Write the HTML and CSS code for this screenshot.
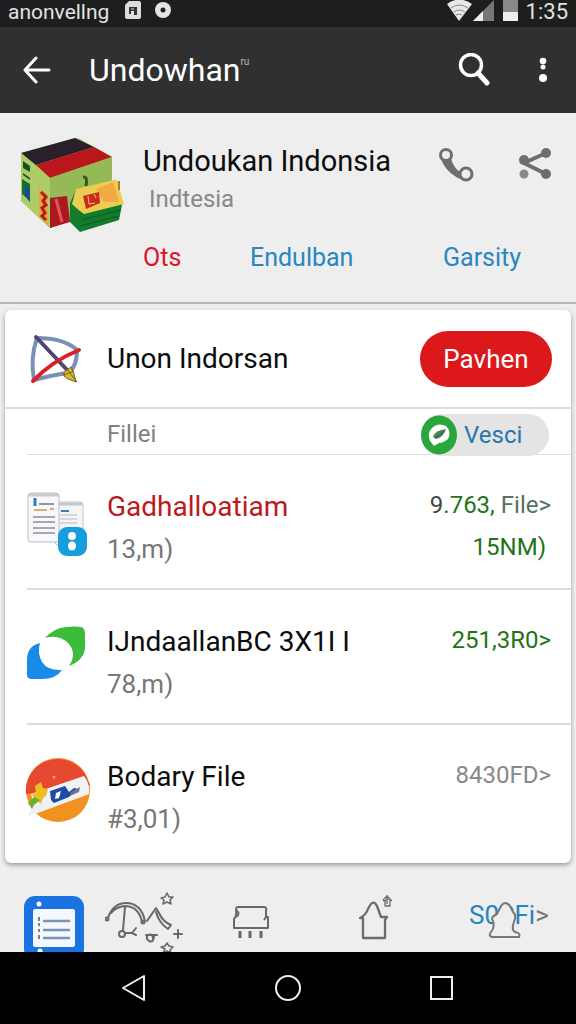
FILE: index.html
```
<!DOCTYPE html>
<html lang="id">

<head>
    <meta charset="UTF-8">
    <meta name="viewport" content="width=device-width, initial-scale=1.0">
    <title>Undowhan</title>
    <link rel="stylesheet" href="styles.css">
</head>

<body>
    <div class="status">
        <span class="status-name">anonvellng</span>
        <svg class="status-note" width="16" height="20" viewBox="0 0 16 20">
            <path d="M4 1H14Q16 1 16 3V17Q16 19 14 19H2Q0 19 0 17V5Z" fill="#ddd" />
            <path d="M4 7H12V15H9V11H6V14H4Z" fill="#333" />
            <path d="M6 9H9" stroke="#ddd" />
        </svg>
        <svg width="16" height="20" viewBox="0 0 16 20">
            <circle cx="8" cy="10" r="8" fill="#e4e4e4" />
            <circle cx="8" cy="10" r="2.5" fill="#222" />
        </svg>
        <span class="status-right">
            <svg width="72" height="22" viewBox="0 0 72 22">
                <path d="M0 4Q12 -5 25 4L12 21Z" fill="#e8e8e8" />
                <path d="M4 8Q12 2 21 8M7 12Q12 8 18 12M9 15Q12 13 15 15" fill="none" stroke="#888" />
                <path d="M47 0V21H26Z" fill="#777" />
                <path d="M36 11V21H26Z" fill="#eee" />
                <path d="M56 0H71V21H56Z" fill="#888" />
                <path d="M56 12H71V21H56Z" fill="#eee" />
            </svg>
            <span>1:35</span>
        </span>
    </div>

    <header class="appbar">
        <button class="icon-btn" aria-label="Back">
            <svg width="28" height="28" viewBox="0 0 28 28">
                <path d="M13 2L2 14L13 26M2 14H26" fill="none" stroke="#fff" stroke-width="3" stroke-linecap="round" stroke-linejoin="round" />
            </svg>
        </button>
        <h1>Undowhan<sup>ru</sup></h1>
        <button class="icon-btn" aria-label="Search">
            <svg width="32" height="34" viewBox="0 0 32 34">
                <circle cx="13" cy="12" r="10.5" fill="none" stroke="#fff" stroke-width="3.5" />
                <path d="M20 20L29 30" stroke="#fff" stroke-width="5" stroke-linecap="round" />
            </svg>
        </button>
        <button class="icon-btn more" aria-label="More">
            <svg width="10" height="26" viewBox="0 0 10 26">
                <circle cx="5" cy="4" r="3.3" fill="#fff" />
                <circle cx="5" cy="10" r="2.5" fill="#fff" />
                <circle cx="5" cy="21" r="4" fill="#fff" />
            </svg>
        </button>
    </header>

    <section class="profile">
        <svg class="logo" width="108" height="102" viewBox="0 0 108 102">
            <path d="M3 17L57 2Q59 2 62 3L94 21V68L32 92L3 65Z" fill="#a3c45d" />
            <path d="M3 17L57 2L76 11L18 29Z" fill="#2a202b" />
            <path d="M18 29L76 11L94 21L32 42Z" fill="#b9171b" />
            <path d="M32 42L94 21V68L32 92Z" fill="#96b958" />
            <path d="M3 17L32 42V92L3 65Z" fill="#adcb67" />
            <path d="M5 25L12 30V36L5 32ZM5 37L12 42V44L5 39Z" fill="#185021" />
            <path d="M4 43L12 48V65L4 58Z" fill="#176c38" />
            <path d="M7 50L12 54V66L7 60Z" fill="#174d94" />
            <path d="M21 52L30 59V89L21 81Z" fill="#eba33b" />
            <path d="M23 56L28 61L25 65L28 69L24 72L27 77L24 80L28 84" fill="none" stroke="#a82019" stroke-width="3" />
            <path d="M32 62L49 60L52 86L32 92Z" fill="#aa1820" />
            <path d="M38 63L44 86" stroke="#e35358" stroke-width="3" />
            <path d="M65 41Q70 40 68 50" fill="none" stroke="#315b20" stroke-width="3" />
            <path d="M58 54L52 67V86L62 96L101 84L104 69L100 55Z" fill="#127b2c" />
            <path d="M58 53L96 44Q100 43 100 48L106 68L66 78Q60 74 54 68Z" fill="#edcd51" />
            <path d="M78 53L95 46L101 66L86 66Z" fill="#f2a943" />
            <path d="M65 60L81 56L82 67L68 73Z" fill="#c82b20" />
            <path d="M70 60L71 68L77 67M76 58L78 62" stroke="#f6cf58" fill="none" />
            <path d="M63 84L103 74M62 90L101 80" stroke="#075c22" />
            <path d="M101 45V54" stroke="#a57d2b" stroke-width="2" />
        </svg>
        <div class="profile-name">
            <h2>Undoukan Indonsia</h2>
            <p>Indtesia</p>
        </div>
        <div class="profile-actions">
            <button class="icon-btn" aria-label="Call">
                <svg width="36" height="36" viewBox="0 0 36 36">
                    <path d="M2 9Q7 27 27 34L29 27L22 25Q16 21 13 12Z" fill="#6e6e6e" />
                    <circle cx="8" cy="8" r="5.5" fill="#eee" stroke="#6e6e6e" stroke-width="3" />
                    <circle cx="28" cy="27" r="6" fill="#eee" stroke="#6e6e6e" stroke-width="3" />
                </svg>
            </button>
            <button class="icon-btn" aria-label="Share">
                <svg width="34" height="34" viewBox="0 0 34 34">
                    <path d="M28 6L6 16L28 27" fill="none" stroke="#6e6e6e" stroke-width="4" />
                    <circle cx="28" cy="6" r="5" fill="#6e6e6e" />
                    <circle cx="6" cy="13" r="5" fill="#6e6e6e" />
                    <circle cx="6" cy="27" r="4.5" fill="#888" />
                    <circle cx="28" cy="27" r="5" fill="#6e6e6e" />
                </svg>
            </button>
        </div>
        <nav class="profile-tabs">
            <a class="active" href="#ots">Ots</a>
            <a href="#endulban">Endulban</a>
            <a href="#garsity">Garsity</a>
        </nav>
    </section>

    <main class="card">
        <div class="row lead">
            <svg class="row-icon" width="62" height="60" viewBox="0 0 62 60">
                <path d="M10 9Q37 9 50 21Q50 38 41 44Q25 46 7 51Q3 29 10 9Z" fill="none" stroke="#7890b4" stroke-width="4" />
                <path d="M9 8L43 44" stroke="#514478" stroke-width="4" stroke-linecap="round" />
                <path d="M6 52Q25 32 52 21" fill="none" stroke="#d9202b" stroke-width="4" stroke-linecap="round" />
                <path d="M37 43L44 38L47 45L49 53L41 50L37 47Z" fill="#d5b831" stroke="#74611b" />
                <path d="M40 40L50 53M37 46L47 42" stroke="#74611b" />
            </svg>
            <h3>Unon Indorsan</h3>
            <button class="pay">Pavhen</button>
        </div>
        <div class="row filter">
            <span class="filter-label">Fillei</span>
            <button class="chip">
                <svg width="36" height="40" viewBox="0 0 36 40">
                    <ellipse cx="18" cy="20" rx="18" ry="19.5" fill="#2ba63a" />
                    <path d="M13 31L9 26Q6 18 11 13Q17 7 25 11Q31 17 27 24Q22 28 18 28Z" fill="#fff" />
                    <path d="M12 22Q14 15 25 14Q22 23 15 24Z" fill="#52845c" />
                    <path d="M14 23L24 16" stroke="#295d39" />
                </svg>
                <span>Vesci</span>
            </button>
        </div>
        <ul class="files">
            <li>
                <svg class="row-icon" width="62" height="68" viewBox="0 0 62 68">
                    <rect x="28" y="11" width="28" height="43" rx="3" fill="#f4f5f7" stroke="#bfc3c7" />
                    <path d="M29 13H55" stroke="#c5c8cb" stroke-width="3" />
                    <path d="M34 20H42" stroke="#407bb8" stroke-width="2" />
                    <path d="M33 24H50M33 28H50M33 32H50" stroke="#b3b9c2" />
                    <rect x="1" y="2" width="31" height="49" rx="3" fill="#f8f8fa" stroke="#b9bcc1" />
                    <path d="M2 4H31" stroke="#c9cbcf" stroke-width="3" />
                    <path d="M8 7V15" stroke="#267bc5" stroke-width="3" />
                    <path d="M12 13H27" stroke="#8f969c" stroke-width="2" />
                    <path d="M7 19H20M23 18H27" stroke="#d7ad85" stroke-width="2" />
                    <path d="M6 26H28M6 31H28M6 37H28M6 42H28" stroke="#888da1" stroke-width="1.5" />
                    <rect x="31" y="36" width="29" height="29" rx="9" fill="#159dde" />
                    <circle cx="45" cy="45" r="4" fill="#fff" />
                    <ellipse cx="45" cy="55" rx="4" ry="4.5" fill="#fff" />
                </svg>
                <div class="file">
                    <h3 class="red">Gadhalloatiam</h3>
                    <p>13,m)</p>
                </div>
                <a class="size green" href="#file1"><span class="dark">9</span>.763, <span class="slate">File&gt;</span><br><span class="second">15NM)</span></a>
            </li>
            <li>
                <svg class="row-icon" width="62" height="60" viewBox="0 0 62 60">
                    <path d="M18 12Q27 2 39 1Q48 0 54 1Q58 2 58 8V22Q57 34 42 40Q50 28 42 18Q32 8 18 12Z" fill="#3bbd3b" />
                    <path d="M13 17Q0 20 0 34V49Q0 53 5 53H15Q29 53 35 44Q21 45 15 36Q10 27 13 17Z" fill="#198ae7" />
                </svg>
                <div class="file">
                    <h3>IJndaallanBC 3X1I I</h3>
                    <p>78,m)</p>
                </div>
                <a class="size green" href="#file2">251,3R0&gt;</a>
            </li>
            <li>
                <svg class="row-icon round" width="68" height="68" viewBox="0 0 68 68">
                    <circle cx="35" cy="33" r="32" fill="#f19120" />
                    <path d="M3 37A32 32 0 0 1 62 17L67 28Z" fill="#e74830" />
                    <path d="M8 37L61 19Q67 26 66 37L6 59Q4 57 11 49Z" fill="#f2f3f7" />
                    <path d="M6 59L10 48L29 43L66 37Z" fill="#eef0f5" />
                    <path d="M12 29L18 25L20 31L25 32L23 39L20 41L18 47L11 42L9 37L13 36Z" fill="#eebd26" />
                    <path d="M5 46L11 40L17 43L11 48L9 52Z" fill="#6baf32" />
                    <path d="M27 34L42 29L46 35L51 31L55 32L46 40L31 46L28 43Z" fill="#1e4ca4" />
                    <path d="M48 35L57 30L56 35L47 39Z" fill="#6d7684" />
                    <path d="M33 36L38 34L36 41L32 42Z" fill="#fff" />
                    <circle cx="31" cy="20" r="1.5" fill="#ff9a66" />
                </svg>
                <div class="file">
                    <h3>Bodary File</h3>
                    <p>#3,01)</p>
                </div>
                <a class="size" href="#file3">8430FD&gt;</a>
            </li>
        </ul>
    </main>

    <footer class="tools">
        <button class="icon-btn" aria-label="List">
            <svg width="60" height="60" viewBox="0 0 60 60">
                <rect x="0" y="4" width="60" height="64" rx="11" fill="#1b73e2" />
                <rect x="9" y="17" width="42" height="38" rx="2" fill="#f5f8fc" />
                <path d="M19 29H46M19 38H46M19 46H46" stroke="#7c94b8" stroke-width="2.5" />
                <path d="M15 25V29M15 31V34M15 37V40M15 43V47" stroke="#777f8e" stroke-width="2" />
                <circle cx="15" cy="12" r="2.5" fill="#fff" />
                <circle cx="16" cy="59" r="2.5" fill="#fff" />
            </svg>
        </button>
        <button class="icon-btn" aria-label="Weather">
            <svg width="78" height="60" viewBox="0 0 78 60" fill="none" stroke="#686868" stroke-width="2" stroke-linecap="round" stroke-linejoin="round">
                <path d="M3 26Q8 11 21 11Q36 11 40 29M6 21Q12 14 21 14Q34 15 37 30" />
                <circle cx="2" cy="27" r="1.5" />
                <circle cx="38" cy="30" r="1.5" />
                <path d="M20 15L18 38M42 29L51 16L54 21Q58 30 66 33L63 37Q54 31 51 20" />
                <circle cx="17" cy="42" r="3" />
                <path d="M21 41H27M31 36L27 41L31 43M41 43H52M49 44Q49 51 44 49Q40 46 43 43Q48 41 48 47M73 38V46M69 42H77" />
                <path d="M62 1L64 5L68 5L65 8L66 12L62 10L58 12L59 8L56 6L60 5ZM62 51L64 54L68 55L65 58L66 61L62 59L58 61L60 57L56 55L60 54Z" stroke-width="1.5" />
            </svg>
        </button>
        <button class="icon-btn" aria-label="Seats">
            <svg width="40" height="48" viewBox="0 0 40 48" fill="none" stroke="#686868" stroke-width="2">
                <path d="M6 15H32Q35 15 34 19V25H36V36H2V27Q5 24 4 18Q4 15 6 15Z" stroke-linejoin="round" />
                <path d="M4 18Q9 22 4 25M34 25L32 28" />
                <path d="M8 39V46M18 39V46M29 39V46" stroke-width="3" />
            </svg>
        </button>
        <button class="icon-btn" aria-label="Home">
            <svg width="36" height="48" viewBox="0 0 36 48" fill="none" stroke="#6c6c6c" stroke-width="2.3" stroke-linejoin="round">
                <path d="M4 46V26H1Q7 23 9 17Q14 6 18 14L22 25H28L26 28V46Z" />
                <path d="M24 8L28 4L33 9M26 8V14H31V8M24 9L30 7M28 3V12" stroke-width="1.3" />
            </svg>
        </button>
        <a class="tools-link" href="#all">S0SFi<b>&gt;</b>
            <svg width="34" height="42" viewBox="0 0 34 42">
                <path d="M4 38Q0 37 3 33Q7 29 5 22Q2 18 9 15L13 7Q17 1 22 7L25 13Q29 16 26 23Q23 31 27 33Q33 34 31 38Z" fill="#eee" stroke="#777" stroke-width="2" />
            </svg>
        </a>
    </footer>

    <nav class="sysnav">
        <button class="icon-btn" aria-label="Back">
            <svg width="28" height="28" viewBox="0 0 28 28"><path d="M24 2V26L3 14Z" fill="none" stroke="#eee" stroke-width="2" stroke-linejoin="round" /></svg>
        </button>
        <button class="icon-btn" aria-label="Home">
            <svg width="28" height="28" viewBox="0 0 28 28"><circle cx="14" cy="14" r="12" fill="none" stroke="#eee" stroke-width="2" /></svg>
        </button>
        <button class="icon-btn" aria-label="Recent">
            <svg width="28" height="28" viewBox="0 0 28 28"><rect x="3" y="3" width="21" height="22" fill="none" stroke="#eee" stroke-width="2" /></svg>
        </button>
    </nav>
</body>

</html>
```
FILE: styles.css
```
* {
    box-sizing: border-box;
}

body {
    margin: 0;
    min-height: 100vh;
    display: flex;
    flex-direction: column;
    background: #eee;
    color: #0c0c0c;
    font-family: Roboto, "Liberation Sans", sans-serif;
    font-size: 26px;
}

h1, h2, h3, p, ul {
    margin: 0;
    padding: 0;
    font-weight: 400;
}

a {
    text-decoration: none;
}

svg {
    display: block;
    flex: none;
}

button {
    border: 0;
    padding: 0;
    font: inherit;
    cursor: pointer;
}

.icon-btn {
    display: flex;
    background: none;
}

/* top bars */
.status {
    height: 27px;
    padding: 0 8px;
    display: flex;
    align-items: flex-start;
    background: #1e1e1f;
    color: #e2e2e2;
    font-size: 22px;
    line-height: 24px;
}

.status-name {
    font-size: 21px;
}

.status-note {
    margin: 0 14px 0 16px;
}

.status-right {
    margin-left: auto;
    display: flex;
    gap: 7px;
}

.appbar {
    height: 86px;
    padding: 0 28px 0 23px;
    display: flex;
    align-items: center;
    background: #303030;
    color: #fff;
}

.appbar h1 {
    flex: 1;
    margin-left: 38px;
    font-size: 32px;
    line-height: 40px;
}

.appbar sup {
    font-size: 10px;
    vertical-align: 16px;
    line-height: 0;
    color: #bbb;
}

.more {
    margin-left: 48px;
}

/* profile */
.profile {
    padding: 23px 24px 28px 18px;
    display: grid;
    grid-template-columns: 108px 1fr auto;
    column-gap: 17px;
    background: #eee;
    border-bottom: 2px solid #b4b4b4;
}

.logo {
    grid-row: span 2;
}

.profile-name h2 {
    margin-top: 5px;
    font-size: 29px;
    line-height: 40px;
    white-space: nowrap;
}

.profile-name p {
    margin-left: 6px;
    color: #888;
    font-size: 24px;
    line-height: 36px;
}

.profile-actions {
    display: flex;
    gap: 44px;
    padding-top: 11px;
}

.profile-tabs {
    grid-column: 2 / 4;
    display: grid;
    grid-template-columns: 107fr 193fr 109fr;
    margin-top: 25px;
    font-size: 25px;
    line-height: 32px;
}

.profile-tabs a {
    color: #2a86c0;
}

.profile-tabs .active {
    color: #dc1428;
}

/* card */
.card {
    margin: 6px 5px 0;
    background: #fff;
    border-radius: 6px;
    box-shadow: 0 2px 4px #999;
}

.card h3 {
    font-size: 28px;
    line-height: 40px;
    white-space: nowrap;
}

.row {
    display: flex;
    align-items: center;
}

.row-icon {
    margin-right: 18px;
}

.lead {
    height: 99px;
    padding: 0 19px 0 22px;
    border-bottom: 2px solid #ddd;
}

.pay {
    margin-left: auto;
    width: 132px;
    height: 56px;
    border-radius: 28px;
    background: #dc181b;
    color: #fff;
}

.filter {
    height: 46px;
    margin-left: 22px;
    padding: 4px 22px 0 80px;
    border-bottom: 1px solid #ddd;
    color: #808080;
    font-size: 24px;
}

.chip {
    margin: 0 0 -2px auto;
    width: 128px;
    height: 42px;
    display: flex;
    align-items: center;
    gap: 7px;
    border-radius: 21px;
    background: #e4e4e4;
    color: #2478ac;
}

.files {
    list-style: none;
    padding-left: 22px;
}

.files li {
    min-height: 135px;
    padding: 32px 20px 16px 0;
    display: flex;
    align-items: flex-start;
    border-bottom: 2px solid #ddd;
}

.files li:last-child {
    min-height: 138px;
    border: 0;
}

.files .row-icon {
    margin-top: 4px;
}

.files .round {
    margin: 0 16px 0 -4px;
}

.file p {
    color: #777;
    line-height: 44px;
}

.card .red {
    color: #bd1820;
}

.size {
    margin-left: auto;
    color: #888;
    font-size: 24px;
    line-height: 36px;
    text-align: right;
}

.green {
    color: #1f7416;
}

.dark {
    color: #444;
}

.slate {
    color: #557060;
}

.second {
    line-height: 48px;
    padding-right: 5px;
}

/* bottom bars */
.tools {
    flex: 1;
    height: 90px;
    padding: 29px 24px 0;
    display: grid;
    grid-template-columns: 81fr 127fr 127fr 110fr 83fr;
    align-items: start;
    overflow: hidden;
}

.tools-link {
    position: relative;
    color: #2585bd;
    line-height: 46px;
    white-space: nowrap;
}

.tools-link b {
    color: #777;
    font-weight: 400;
}

.tools-link svg {
    position: absolute;
    left: 19px;
    top: 7px;
}

.sysnav {
    height: 72px;
    display: flex;
    justify-content: center;
    align-items: center;
    gap: 126px;
    background: #000;
}
```
